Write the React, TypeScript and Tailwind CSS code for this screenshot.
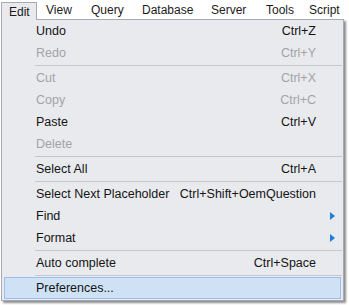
type Item = {
  label: string;
  shortcut?: string;
  disabled?: boolean;
  submenu?: boolean;
  active?: boolean;
};

type Entry = Item | "sep";

const entries: Entry[] = [
  { label: "Undo", shortcut: "Ctrl+Z" },
  { label: "Redo", shortcut: "Ctrl+Y", disabled: true },
  "sep",
  { label: "Cut", shortcut: "Ctrl+X", disabled: true },
  { label: "Copy", shortcut: "Ctrl+C", disabled: true },
  { label: "Paste", shortcut: "Ctrl+V" },
  { label: "Delete", disabled: true },
  "sep",
  { label: "Select All", shortcut: "Ctrl+A" },
  "sep",
  { label: "Select Next Placeholder", shortcut: "Ctrl+Shift+OemQuestion" },
  { label: "Find", submenu: true },
  { label: "Format", submenu: true },
  "sep",
  { label: "Auto complete", shortcut: "Ctrl+Space" },
  "sep",
  { label: "Preferences...", active: true },
];

const menus = [
  { label: "View", w: "w-[45px]" },
  { label: "Query", w: "w-[51px]" },
  { label: "Database", w: "w-[69px]" },
  { label: "Server", w: "w-[55px]" },
  { label: "Tools", w: "w-[43px]" },
  { label: "Script", w: "w-[40px]" },
];

function Arrow() {
  return (
    <svg width="5" height="8" viewBox="0 0 5 8" className="block">
      <polygon points="0,0 5,4 0,8" fill="#1a7fd6" />
    </svg>
  );
}

function Row({ item }: { item: Item }) {
  const color = item.disabled ? "text-[#a3a3a6]" : "text-[#141414]";
  if (item.active) {
    return (
      <div className="mx-[2px] flex h-[22px] items-center border border-[#98c0ea] bg-[#cfe2f5] pl-[31px]">
        <span className={color}>{item.label}</span>
      </div>
    );
  }
  return (
    <div className={`flex h-[22px] items-center pl-[34px] pr-[8px] ${color}`}>
      <span className="flex-1 whitespace-nowrap">{item.label}</span>
      {item.shortcut && <span className="whitespace-nowrap">{item.shortcut}</span>}
      <span className="flex w-[19px] justify-end">{item.submenu && <Arrow />}</span>
    </div>
  );
}

export default function App() {
  return (
    <div
      className="h-[305px] w-[349px] overflow-hidden bg-white text-[12.5px] leading-none"
      style={{ fontFamily: '"Liberation Sans", Arial, sans-serif' }}
    >
      <div className="flex h-[19px] items-end text-[12px] text-[#1b1b1b]">
        <div className="relative z-10 ml-[1px] -mb-px flex h-[18px] w-[40px] items-center border-x border-t border-[#a9a9b1] bg-[#e9eaee] pl-[7px]">
          Edit
        </div>
        <div className="ml-[9px] flex h-[18px] items-center">
          {menus.map((m) => (
            <span key={m.label} className={`${m.w} whitespace-nowrap`}>
              {m.label}
            </span>
          ))}
        </div>
      </div>
      <div className="ml-[1px] w-[343px] border border-[#a9a9b1] bg-[#e9eaee] pb-[1px] shadow-[2px_2px_2px_rgba(0,0,0,0.45)]">
        {entries.map((e, i) =>
          e === "sep" ? (
            <div key={i} className="flex h-[3px] items-center pl-[33px] pr-[1px]">
              <div className="h-px flex-1 bg-[#c6c7cd]" />
            </div>
          ) : (
            <Row key={i} item={e} />
          )
        )}
      </div>
    </div>
  );
}
